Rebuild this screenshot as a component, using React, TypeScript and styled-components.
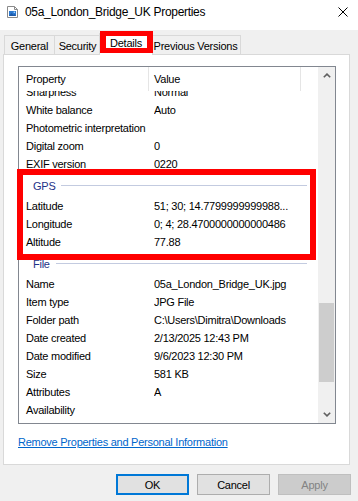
import React from "react";
import styled, { createGlobalStyle } from "styled-components";

const FONT = `"Liberation Sans", Arial, sans-serif`;

const GlobalStyle = createGlobalStyle`
  html, body { margin: 0; padding: 0; background: #f0f0f0; }
  body { font-family: ${FONT}; font-size: 11px; color: #000; letter-spacing: -0.25px; }
  * { box-sizing: border-box; }
`;

const Window = styled.div`
  position: relative;
  width: 358px;
  height: 501px;
  background: #f0f0f0;
  overflow: hidden;
  display: flex;
  flex-direction: column;
`;

const TitleBar = styled.div`
  height: 30px;
  background: #fff;
  display: flex;
  align-items: flex-start;
  padding: 6px 0 0 7px;
`;

const TitleText = styled.div`
  margin-left: 7px;
  margin-top: -1px;
  font-size: 12px;
  line-height: 14px;
  letter-spacing: -0.3px;
  color: #000;
  flex: 1;
`;

const CloseBtn = styled.div`
  width: 10px;
  height: 10px;
  margin: 1px 10px 0 0;
  display: flex;
`;

const TabStrip = styled.div`
  height: 24px;
  display: flex;
  align-items: flex-end;
  padding-left: 4px;
  position: relative;
  z-index: 1;
`;

const Tab = styled.div<{ $active?: boolean; $w: number }>`
  width: ${(p) => p.$w}px;
  flex: none;
  height: ${(p) => (p.$active ? 22 : 19)}px;
  margin-bottom: ${(p) => (p.$active ? -1 : 0)}px;
  padding-top: ${(p) => (p.$active ? 2 : 3)}px;
  margin-left: ${(p) => (p.$active ? -2 : -1)}px;
  margin-right: ${(p) => (p.$active ? -2 : 0)}px;
  background: ${(p) => (p.$active ? "#fff" : "#f0f0f0")};
  border: 1px solid #d9d9d9;
  border-bottom: none;
  font-size: 11px;
  line-height: 14px;
  text-align: center;
  white-space: nowrap;
  position: relative;
  z-index: ${(p) => (p.$active ? 2 : 1)};
  &:first-child { margin-left: 0; }
`;

const Panel = styled.div`
  margin: 0 0 0 3px;
  width: 347px;
  height: 411px;
  border: 1px solid #d9d9d9;
  background: #fff;
  padding: 11px 0 0 14px;
  display: flex;
  flex-direction: column;
`;

const ListBox = styled.div`
  width: 318px;
  height: 358px;
  border: 1px solid #828790;
  display: flex;
  background: #fff;
`;

const ListMain = styled.div`
  flex: 1;
  display: flex;
  flex-direction: column;
  min-width: 0;
`;

const Header = styled.div`
  height: 24px;
  display: flex;
  flex: none;
`;

const HeaderCell = styled.div<{ $w: number; $pad: number }>`
  width: ${(p) => p.$w}px;
  height: 100%;
  padding-left: ${(p) => p.$pad}px;
  border-right: 1px solid #e5e5e5;
  display: flex;
  align-items: center;
  font-size: 11px;
`;

const Body = styled.div`
  flex: 1;
  overflow: hidden;
`;

const Content = styled.div<{ $scroll: number }>`
  margin-top: ${(p) => -p.$scroll}px;
`;

const Row = styled.div`
  height: 18px;
  display: flex;
  align-items: center;
  font-size: 11px;
  white-space: nowrap;
`;

const Label = styled.div`
  width: 135px;
  padding-left: 7px;
  flex: none;
  overflow: hidden;
`;

const Value = styled.div`
  width: 146px;
  overflow: hidden;
  white-space: nowrap;
`;

const Group = styled.div`
  height: 24px;
  display: flex;
  align-items: center;
  padding: 2px 11px 0 14px;
`;

const GroupTitle = styled.div`
  color: #1e3287;
  font-size: 11px;
`;

const GroupLine = styled.div`
  flex: 1;
  height: 1px;
  margin-left: 6px;
  margin-top: -1px;
  background: #c3cbe0;
`;

const ScrollBar = styled.div`
  width: 17px;
  flex: none;
  background: #f0f0f0;
  display: flex;
  flex-direction: column;
`;

const ScrollArrow = styled.div`
  height: 17px;
  display: flex;
  align-items: center;
  justify-content: center;
`;

const Track = styled.div`
  flex: 1;
  display: flex;
  flex-direction: column;
`;

const Thumb = styled.div<{ $top: number; $size: number }>`
  margin: ${(p) => p.$top}px 1px 0;
  height: ${(p) => p.$size}px;
  background: #cdcdcd;
`;

const Link = styled.a`
  margin-top: 11px;
  color: #0066cc;
  text-decoration: underline;
  font-size: 11px;
  line-height: 14px;
  align-self: flex-start;
  cursor: pointer;
`;

const ButtonRow = styled.div`
  display: flex;
  justify-content: flex-end;
  gap: 8px;
  padding: 9px 7px 0 0;
`;

const Button = styled.div<{ $default?: boolean; $disabled?: boolean }>`
  width: 73px;
  height: 21px;
  display: flex;
  align-items: center;
  justify-content: center;
  font-size: 11px;
  background: ${(p) => (p.$disabled ? "#cccccc" : "#e1e1e1")};
  color: ${(p) => (p.$disabled ? "#838383" : "#000")};
  border: ${(p) =>
    p.$default ? "2px solid #0078d7" : p.$disabled ? "1px solid #bfbfbf" : "1px solid #adadad"};
`;

const Highlight = styled.div<{ $x: number; $y: number; $w: number; $h: number; $bx: number; $by: number }>`
  position: absolute;
  left: ${(p) => p.$x}px;
  top: ${(p) => p.$y}px;
  width: ${(p) => p.$w}px;
  height: ${(p) => p.$h}px;
  border-style: solid;
  border-color: #ff0000;
  border-width: ${(p) => `${p.$by}px ${p.$bx}px`};
  pointer-events: none;
  z-index: 10;
`;

const FileIcon = () => (
  <svg width="11" height="12" viewBox="0 0 11 12">
    <path d="M0.5 0.5 H7.5 L10.5 3.5 V11.5 H0.5 Z" fill="#fff" stroke="#8a8a8a" />
    <path d="M7.5 0.5 V3.5 H10.5" fill="none" stroke="#8a8a8a" />
    <rect x="2" y="5" width="7" height="5" fill="#2b79d0" />
    <path d="M2 10 L4.5 7 L6.5 9 L7.5 8 L9 10 Z" fill="#1e5aa8" />
    <circle cx="7.3" cy="6.3" r="0.8" fill="#bfe0ff" />
  </svg>
);

const CloseIcon = () => (
  <svg width="10" height="10" viewBox="0 0 10 10">
    <path d="M0.5 0.5 L9.5 9.5 M9.5 0.5 L0.5 9.5" stroke="#000" strokeWidth="1" />
  </svg>
);

const Chevron = ({ up }: { up?: boolean }) => (
  <svg width="8" height="5" viewBox="0 0 8 5">
    <path
      d={up ? "M0.8 4.3 L4 1.1 L7.2 4.3" : "M0.8 0.7 L4 3.9 L7.2 0.7"}
      fill="none"
      stroke="#606060"
      strokeWidth="1.6"
    />
  </svg>
);

type Item = { kind: "row"; label: string; value?: string } | { kind: "group"; title: string };

const items: Item[] = [
  { kind: "row", label: "Sharpness", value: "Normal" },
  { kind: "row", label: "White balance", value: "Auto" },
  { kind: "row", label: "Photometric interpretation" },
  { kind: "row", label: "Digital zoom", value: "0" },
  { kind: "row", label: "EXIF version", value: "0220" },
  { kind: "group", title: "GPS" },
  { kind: "row", label: "Latitude", value: "51; 30; 14.7799999999988..." },
  { kind: "row", label: "Longitude", value: "0; 4; 28.4700000000000486" },
  { kind: "row", label: "Altitude", value: "77.88" },
  { kind: "group", title: "File" },
  { kind: "row", label: "Name", value: "05a_London_Bridge_UK.jpg" },
  { kind: "row", label: "Item type", value: "JPG File" },
  { kind: "row", label: "Folder path", value: "C:\\Users\\Dimitra\\Downloads" },
  { kind: "row", label: "Date created", value: "2/13/2025 12:43 PM" },
  { kind: "row", label: "Date modified", value: "9/6/2023 12:30 PM" },
  { kind: "row", label: "Size", value: "581 KB" },
  { kind: "row", label: "Attributes", value: "A" },
  { kind: "row", label: "Availability" },
];

const tabs = [
  { label: "General", w: 51 },
  { label: "Security", w: 47 },
  { label: "Details", w: 54 },
  { label: "Previous Versions", w: 91 },
];

export default function App() {
  return (
    <>
      <GlobalStyle />
      <Window>
        <TitleBar>
          <FileIcon />
          <TitleText>05a_London_Bridge_UK Properties</TitleText>
          <CloseBtn>
            <CloseIcon />
          </CloseBtn>
        </TitleBar>
        <TabStrip>
          {tabs.map((t) => (
            <Tab key={t.label} $w={t.w} $active={t.label === "Details"}>
              {t.label}
            </Tab>
          ))}
        </TabStrip>
        <Panel>
          <ListBox>
            <ListMain>
              <Header>
                <HeaderCell $w={130} $pad={7}>Property</HeaderCell>
                <HeaderCell $w={152} $pad={5}>Value</HeaderCell>
              </Header>
              <Body>
                <Content $scroll={8}>
                  {items.map((it, i) =>
                    it.kind === "group" ? (
                      <Group key={i}>
                        <GroupTitle>{it.title}</GroupTitle>
                        <GroupLine />
                      </Group>
                    ) : (
                      <Row key={i}>
                        <Label>{it.label}</Label>
                        <Value>{it.value ?? ""}</Value>
                      </Row>
                    )
                  )}
                </Content>
              </Body>
            </ListMain>
            <ScrollBar>
              <ScrollArrow>
                <Chevron up />
              </ScrollArrow>
              <Track>
                <Thumb $top={219} $size={79} />
              </Track>
              <ScrollArrow>
                <Chevron />
              </ScrollArrow>
            </ScrollBar>
          </ListBox>
          <Link>Remove Properties and Personal Information</Link>
        </Panel>
        <ButtonRow>
          <Button $default>OK</Button>
          <Button>Cancel</Button>
          <Button $disabled>Apply</Button>
        </ButtonRow>
        <Highlight $x={100} $y={31} $w={53} $h={22} $bx={6} $by={5} />
        <Highlight $x={17} $y={169} $w={299} $h={91} $bx={6} $by={6} />
      </Window>
    </>
  );
}
